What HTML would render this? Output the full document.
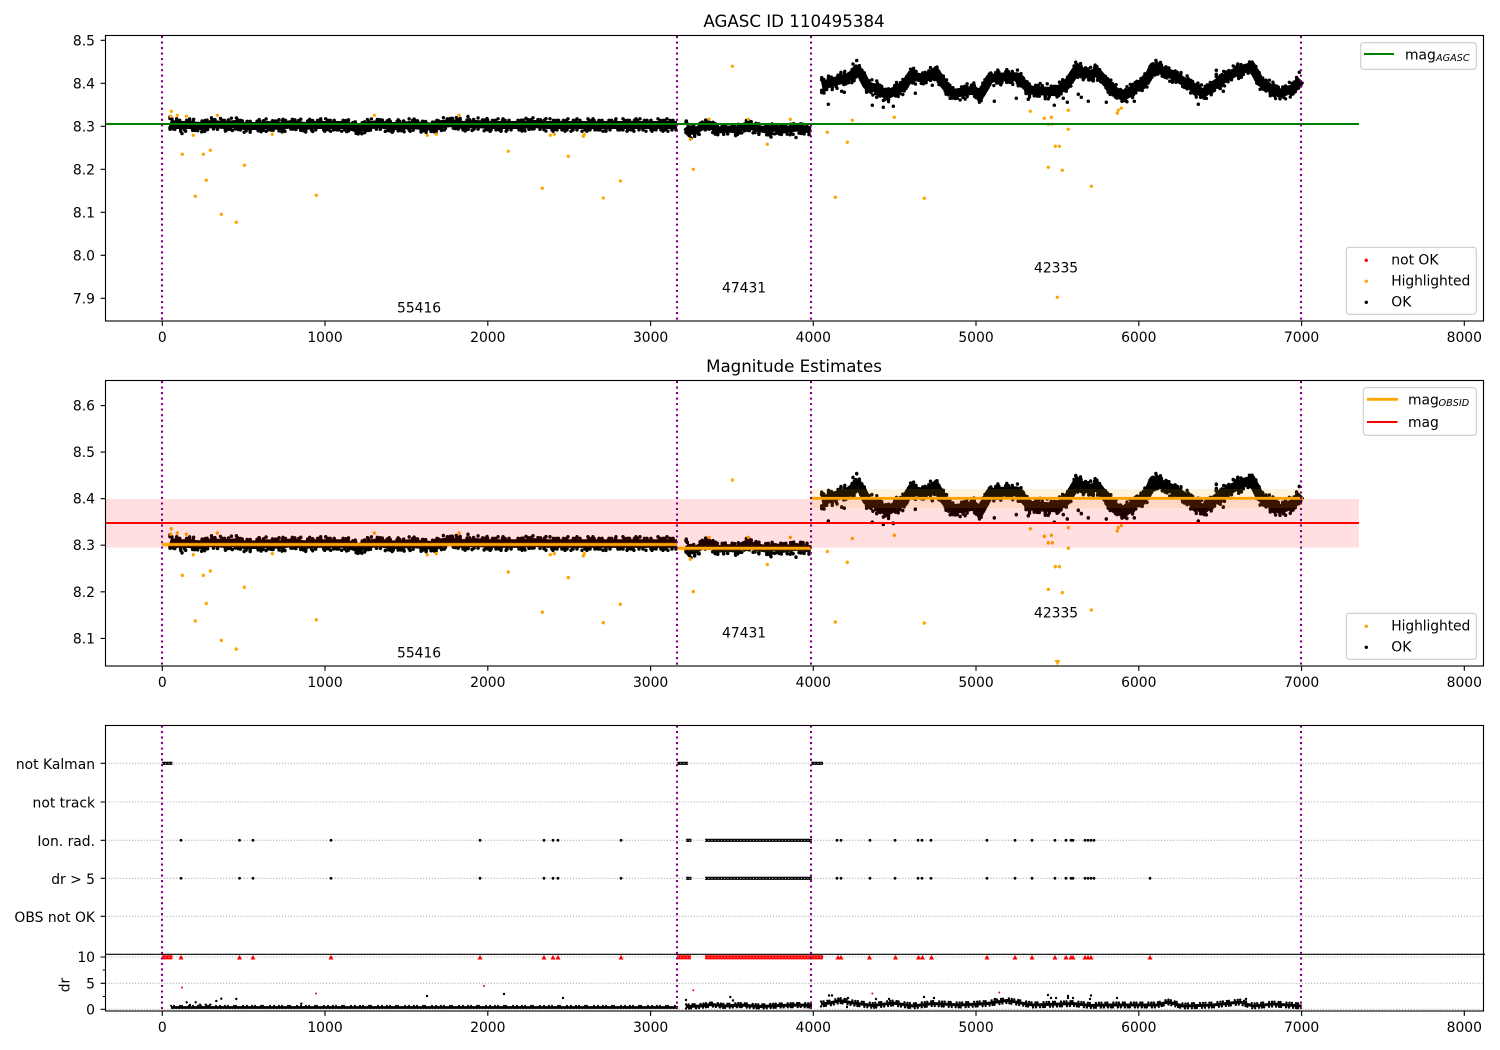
<!DOCTYPE html>
<html><head><meta charset="utf-8"><title>AGASC ID 110495384</title>
<style>
html,body{margin:0;padding:0;background:#fff}
svg{display:block}
text{font-family:"DejaVu Sans","Liberation Sans",sans-serif;font-size:13.89px;fill:#000}
.xt text{text-anchor:middle}
.yt text{text-anchor:end}
.sub{font-size:9.7px;font-style:italic}
.tk{stroke:#000;stroke-width:1.11;fill:none}
.ax{fill:none;stroke:#000;stroke-width:1.11}
.pu{stroke:#800080;stroke-width:2.08;stroke-dasharray:2.08 3.44;fill:none}
.gr{stroke:#b0b0b0;stroke-width:1.11;stroke-dasharray:1.11 1.83;fill:none}
.lg{fill:#fff;fill-opacity:.8;stroke:#ccc;stroke-width:1.11}
</style></head>
<body>
<svg xmlns="http://www.w3.org/2000/svg" width="1500" height="1050" viewBox="0 0 1500 1050">
<defs>
<clipPath id="c1"><rect x="105.5" y="35.5" width="1378" height="285.5"/></clipPath>
<clipPath id="c2"><rect x="105.5" y="380.5" width="1378" height="285.5"/></clipPath>
<path id="s1" d="M170 123L176 125 188 125 200 126 212 124 224 125 236 124 244 126 256 126 268 125 280 126 292 124 304 126 316 125 332 125 345 125 352 127 358 129 366 126 378 124 390 126 400 126 410 125 424 126 436 127 442 124 452 123 462 125 476 124 490 125 504 125 520 125 534 124 548 125 560 125 580 125 600 125 620 125 640 125 660 125 677 125"/>
<path id="s2" d="M686 127L690 131.7 696.7 130 702 127 708 123.3 713 127 718 130 728 129 736.7 130 742 127 746.7 125 756 128 766.7 130 775 128 783 130 796.7 128 811 130"/>
<path id="s3" d="M821.7 85L827 84 833 81.7 840 80 846.7 78.3 852 75 856.7 70.7 861.7 75 866.7 85 871 87 876.7 88.3 882 92 886.7 95 893.3 91.7 898 89 903.3 86.7 908 80 911.7 75 917 77 923.3 78.3 929 76 935 71.7 939 77 943.3 83.3 948 89 953.3 93.3 963 92 973.3 90 980 95 985 87 990 78.3 1003 77 1016.7 76.7 1023 83 1030 90 1043 91 1056.7 91.7 1064 86 1070 80 1073 75 1076.7 69.3 1083 72 1090 75 1096.7 71.7 1103 79 1110 86.7 1116 92 1123.3 96.7 1130 92 1136.7 86.7 1146.7 80 1150 74 1153.3 66.7 1163 71 1173.3 75 1181 80 1190 85 1197 90 1203.3 93.3 1210 88 1216.7 83.3 1225 78 1233.3 73.3 1243 69 1251.7 66.7 1256 74 1260 81.7 1270 88 1280 93.3 1293.3 88.3 1301 80"/>
<path id="b3" d="M821 1004L830 1003 840 1000.5 853 1003 873 1005.5 893 1003 913 1006 933 1003.5 960 1005 987 1003.5 1006.7 1000.5 1033 1005 1073 1003.5 1090 1005.5 1106.7 1005 1140 1005 1156.7 1005 1168 1002 1183 1006 1213 1005 1240 1002 1253 1006 1273 1004 1301.7 1006"/>
<path id="b2" d="M686 1006.5L700 1006 712 1004.5 725 1006 740 1005 760 1006.5 780 1005.5 800 1005 812 1005.5"/>
<g id="d">
 <g fill="none" stroke="#000" stroke-linejoin="round">
  <use href="#s1" stroke-width="8"/><use href="#s2" stroke-width="7"/><use href="#s3" stroke-width="9"/>
  <g stroke-width="3.6" stroke-linecap="round" stroke-dasharray="0 2 0 5 0 3 0 7 0 2.5 0 4 0 9 0 3">
   <g transform="translate(0,-4.6)"><use href="#s1"/><use href="#s2"/></g><use href="#s3" transform="translate(0,-5.2)"/>
  </g>
  <g stroke-width="3.6" stroke-linecap="round" stroke-dasharray="0 3 0 2 0 6 0 4 0 8 0 2 0 3 0 5">
   <g transform="translate(0,4.8)"><use href="#s1"/><use href="#s2"/></g><use href="#s3" transform="translate(0,5.4)"/>
  </g>
  <g stroke-width="3.4" stroke-linecap="round" stroke-dasharray="0 7 0 13 0 4 0 18 0 9 0 11 0 5 0 23">
   <g transform="translate(0,-6.2)"><use href="#s1"/></g><use href="#s3" transform="translate(0,-7.4)"/>
  </g>
  <g stroke-width="3.4" stroke-linecap="round" stroke-dasharray="0 11 0 5 0 16 0 3 0 21 0 7 0 12 0 6">
   <g transform="translate(0,6.2)"><use href="#s1"/></g><use href="#s2" transform="translate(0,5.8)"/><use href="#s3" transform="translate(0,7.6)"/>
  </g>
  <path stroke-width="3.5" stroke-linecap="round" d="M828.3 104.3h0M841.7 91.3h0M844.3 92.3h0M872.3 105.3h0M876.7 97.3h0M883.3 107.3h0M893.3 106.3h0M915.3 93.3h0M932.3 85.3h0M994.3 101.3h0M1016.3 98.3h0M1028.3 99.3h0M1054.3 105.3h0M1067.3 102.3h0M1063.3 98.3h0M1078.3 94.3h0M1081.3 97.3h0M1088.3 101.3h0M1106.3 102.3h0M1134.3 101.3h0M1198.3 104.3h0M1223.3 91.3h0M1075.7 62.3h0M1216.3 70.3h0M1216.3 74.3h0M1299.3 72.3h0M856.7 60.5h0M853 64h0M182 133.5h0M468 116.5h0M686.3 121h0M691 138h0M771 137h0M796 137.5h0M822 91h0M824 93h0"/>
 </g>
 <path fill="none" stroke="#ffa500" stroke-width="3.3" stroke-linecap="round" d="M171.3 111.3h0M170.7 116.3h0M177.3 115.3h0M186.3 116.3h0M217.3 115.3h0M193.3 135.3h0M182.3 154.3h0M203.3 154.3h0M210.3 150.3h0M244.3 165.3h0M206.3 180.3h0M195.3 196.3h0M221.3 214.3h0M236.3 222.3h0M316.3 195.3h0M272.3 134.3h0M374.3 115.3h0M427.3 135.3h0M436.3 134.3h0M459 115.3h0M508.3 151.3h0M542.3 188.3h0M550.3 135.3h0M554.3 134.3h0M568.3 156.3h0M583.3 136.3h0M584.3 134.3h0M603.3 198h0M620.3 181h0M732.3 66.3h0M693.3 169.3h0M690.3 139.3h0M709 119.3h0M748.3 119.3h0M790.3 119.3h0M767.3 144.3h0M827.3 132.3h0M847.3 142.3h0M852.3 120.3h0M835.3 197.3h0M894.3 117.3h0M924.3 198.3h0M1030.3 111.3h0M1044.3 118.3h0M1051.3 117.3h0M1048.3 124.3h0M1052.3 124.3h0M1068.3 110.3h0M1068.3 129.3h0M1055.3 146.3h0M1059.3 146.3h0M1048.3 167.3h0M1062.3 170.3h0M1057.3 297.3h0M1091.3 186.3h0M1117.3 113.3h0M1118.3 110.3h0M1121.3 108.3h0"/>
</g>
<path id="tri" d="M0-2.6L2.5 2H-2.5Z"/>
</defs>
<rect width="1500" height="1050" fill="#fff"/>

<!-- TOP AXES -->
<g clip-path="url(#c1)">
 <use href="#d"/>
 <path d="M105.5 124H1359" stroke="#008000" stroke-width="2.08" fill="none"/>
 <path class="pu" d="M162 36V321M677 36V321M811 36V321M1301 36V321"/>
</g>
<rect class="ax" x="105.5" y="35.5" width="1378" height="285.5"/>
<path class="tk" d="M162.3 321v4.9M325 321v4.9M487.8 321v4.9M650.6 321v4.9M813.3 321v4.9M976 321v4.9M1138.8 321v4.9M1301.6 321v4.9M1464.3 321v4.9M105.5 40.3h-4.9M105.5 83.3h-4.9M105.5 126.3h-4.9M105.5 169.3h-4.9M105.5 212.3h-4.9M105.5 255.3h-4.9M105.5 298.3h-4.9"/>
<g class="xt">
<text x="162.3" y="342">0</text><text x="325" y="342">1000</text><text x="487.8" y="342">2000</text><text x="650.6" y="342">3000</text><text x="813.3" y="342">4000</text><text x="976" y="342">5000</text><text x="1138.8" y="342">6000</text><text x="1301.6" y="342">7000</text><text x="1464.3" y="342">8000</text>
</g>
<g class="yt">
<text x="95" y="45.3">8.5</text><text x="95" y="88.3">8.4</text><text x="95" y="131.3">8.3</text><text x="95" y="174.3">8.2</text><text x="95" y="217.3">8.1</text><text x="95" y="260.3">8.0</text><text x="95" y="303.3">7.9</text>
</g>
<text x="794" y="27" text-anchor="middle" style="font-size:16.67px">AGASC ID 110495384</text>
<text x="397" y="312.3">55416</text><text x="722" y="292.3">47431</text><text x="1034" y="272.3">42335</text>
<rect class="lg" x="1360.7" y="42.7" width="115.6" height="26.6" rx="3"/>
<path d="M1364 54h30" stroke="#008000" stroke-width="2.08"/>
<text x="1405" y="59.3">mag</text><text class="sub" x="1436" y="61.2">AGASC</text>
<rect class="lg" x="1346.3" y="247.3" width="130" height="67" rx="3"/>
<circle cx="1366.3" cy="260.3" r="1.7" fill="#f00"/><circle cx="1366.3" cy="281.3" r="1.7" fill="#ffa500"/><circle cx="1366.3" cy="302.3" r="1.7" fill="#000"/>
<text x="1391.3" y="264.5">not OK</text><text x="1391.3" y="285.5" textLength="79">Highlighted</text><text x="1391.3" y="306.5">OK</text>

<!-- MIDDLE AXES -->
<g clip-path="url(#c2)">
 <use href="#d" transform="translate(0,408.13) scale(1,1.0837)"/>
 <path d="M1054.5 660h6l-3 5.5z" fill="#ffa500"/>
 <rect x="105.5" y="499" width="1253.5" height="48.7" fill="#f00" fill-opacity=".125"/>
 <rect x="162" y="542" width="515" height="5" fill="#ffa500" fill-opacity=".15"/>
 <rect x="677" y="545.5" width="134" height="6" fill="#ffa500" fill-opacity=".15"/>
 <rect x="811" y="489" width="490" height="19" fill="#ffa500" fill-opacity=".13"/>
 <path d="M105.5 523H1359" stroke="#f00" stroke-width="2.08" fill="none"/>
 <path d="M162 544.5H677M677 548.3H811M811 498.3H1303" stroke="#ffa500" stroke-width="2.8" fill="none"/>
 <path class="pu" d="M162 381V666M677 381V666M811 381V666M1301 381V666"/>
</g>
<rect class="ax" x="105.5" y="380.5" width="1378" height="285.5"/>
<path class="tk" d="M162.3 666v4.9M325 666v4.9M487.8 666v4.9M650.6 666v4.9M813.3 666v4.9M976 666v4.9M1138.8 666v4.9M1301.6 666v4.9M1464.3 666v4.9M105.5 405.6h-4.9M105.5 452.1h-4.9M105.5 498.7h-4.9M105.5 545.2h-4.9M105.5 591.8h-4.9M105.5 638.4h-4.9"/>
<g class="xt">
<text x="162.3" y="687">0</text><text x="325" y="687">1000</text><text x="487.8" y="687">2000</text><text x="650.6" y="687">3000</text><text x="813.3" y="687">4000</text><text x="976" y="687">5000</text><text x="1138.8" y="687">6000</text><text x="1301.6" y="687">7000</text><text x="1464.3" y="687">8000</text>
</g>
<g class="yt">
<text x="95" y="410.6">8.6</text><text x="95" y="457.1">8.5</text><text x="95" y="503.7">8.4</text><text x="95" y="550.2">8.3</text><text x="95" y="596.8">8.2</text><text x="95" y="643.4">8.1</text>
</g>
<text x="794" y="372" text-anchor="middle" style="font-size:16.67px">Magnitude Estimates</text>
<text x="397" y="657.3">55416</text><text x="722" y="637.3">47431</text><text x="1034" y="617.3">42335</text>
<rect class="lg" x="1363.3" y="387.7" width="113" height="47.6" rx="3"/>
<path d="M1367 399.3h31" stroke="#ffa500" stroke-width="2.8"/><path d="M1367 422h30.5" stroke="#f00" stroke-width="2.08"/>
<text x="1408" y="404.3">mag</text><text class="sub" x="1438.5" y="406.2">OBSID</text><text x="1408" y="427">mag</text>
<rect class="lg" x="1346.3" y="613.3" width="130" height="46" rx="3"/>
<circle cx="1366.3" cy="626.3" r="1.7" fill="#ffa500"/><circle cx="1366.3" cy="647.3" r="1.7" fill="#000"/>
<text x="1391.3" y="630.5" textLength="79">Highlighted</text><text x="1391.3" y="651.5">OK</text>

<!-- BOTTOM AXES -->
<path class="gr" d="M105.5 763.3H1483M105.5 802H1483M105.5 840.3H1483M105.5 878.3H1483M105.5 916.3H1483M105.5 957H1483M105.5 983.3H1483M105.5 1009.3H1483"/>
<!-- flag rows -->
<g fill="none" stroke="#000">
 <path stroke-width="3.2" d="M162 763.3H172.5M677 763.3H688M811 763.3H823M705 840.3H812M705 878.3H812M686 840.3H691.5M686 878.3H691.5"/>
 <path stroke="#ddd" stroke-width=".9" stroke-dasharray="1 2.2" d="M162 763.3H172.5M677 763.3H688M811 763.3H823M705 840.3H812M705 878.3H812M686 840.3H691.5M686 878.3H691.5"/>
 <path stroke-width="2.8" stroke-linecap="round" d="M181 840.3h0M239.5 840.3h0M253 840.3h0M331 840.3h0M480 840.3h0M544 840.3h0M553 840.3h0M558 840.3h0M621 840.3h0M837 840.3h0M841 840.3h0M870 840.3h0M895 840.3h0M918 840.3h0M922 840.3h0M931 840.3h0M987 840.3h0M1015 840.3h0M1032 840.3h0M1055 840.3h0M1066 840.3h0M1071 840.3h0M1073 840.3h0M1085 840.3h0M1088 840.3h0M1091 840.3h0M1094 840.3h0M181 878.3h0M239.5 878.3h0M253 878.3h0M331 878.3h0M480 878.3h0M544 878.3h0M553 878.3h0M558 878.3h0M621 878.3h0M837 878.3h0M841 878.3h0M870 878.3h0M895 878.3h0M918 878.3h0M922 878.3h0M931 878.3h0M987 878.3h0M1015 878.3h0M1032 878.3h0M1055 878.3h0M1066 878.3h0M1071 878.3h0M1073 878.3h0M1085 878.3h0M1088 878.3h0M1091 878.3h0M1094 878.3h0M1150 878.3h0"/>
</g>
<!-- red row -->
<path d="M162 955.2h10.5v4.2H162zM677 955.2h14v4.2h-14zM705 955.2h118v4.2H705z" fill="#f00"/>
<path d="M162 957.2h10.5M677 957.2h14M705 957.2h118" stroke="#ffc0c0" stroke-width=".8" stroke-dasharray="1 2.2" fill="none"/>
<g fill="#f00" transform="translate(0,957.5)">
<use href="#tri" x="181"/><use href="#tri" x="239.5"/><use href="#tri" x="253"/><use href="#tri" x="331"/><use href="#tri" x="480"/><use href="#tri" x="544"/><use href="#tri" x="553"/><use href="#tri" x="558"/><use href="#tri" x="621"/><use href="#tri" x="838"/><use href="#tri" x="841"/><use href="#tri" x="869.5"/><use href="#tri" x="895.5"/><use href="#tri" x="918.5"/><use href="#tri" x="922.5"/><use href="#tri" x="931.5"/><use href="#tri" x="987"/><use href="#tri" x="1015"/><use href="#tri" x="1032"/><use href="#tri" x="1055"/><use href="#tri" x="1066"/><use href="#tri" x="1071"/><use href="#tri" x="1073"/><use href="#tri" x="1085"/><use href="#tri" x="1088"/><use href="#tri" x="1091"/><use href="#tri" x="1150"/>
</g>
<path fill="none" stroke="#f00" stroke-width="2" stroke-linecap="round" d="M182 987.5h0M316 993.5h0M484 986h0M693.3 990.3h0M872.3 993.5h0M999.3 992.5h0"/>
<!-- dr band -->
<g fill="none" stroke="#000" stroke-linejoin="round">
 <path stroke-width="2.8" d="M171 1007.5H678"/>
 <path stroke-width="2" stroke-linecap="round" stroke-dasharray="0 3 0 6 0 2 0 7 0 4 0 5" d="M171 1005.8H678"/>
 <use href="#b2" stroke-width="3"/><use href="#b3" stroke-width="3"/>
 <g stroke-width="2.4" stroke-linecap="round" stroke-dasharray="0 2.5 0 4 0 2 0 6 0 3">
  <use href="#b2" transform="translate(0,-2)"/><use href="#b3" transform="translate(0,-2.4)"/>
 </g>
 <g stroke-width="2.4" stroke-linecap="round" stroke-dasharray="0 3 0 2 0 5 0 3 0 4">
  <use href="#b2" transform="translate(0,2)"/><use href="#b3" transform="translate(0,2.4)"/>
 </g>
 <path stroke-width="2.4" stroke-linecap="round" d="M186.7 1002.3h0M195.7 1002.3h0M190 1005h0M200 1004.7h0M205.7 1004.7h0M210.3 1004.7h0M216.3 1001h0M221.3 998.7h0M236.3 999h0M301.3 1003.7h0M427 996h0M504 994h0M563 998h0M686 1000h0M730.3 997h0M733 1000.5h0M829 995.5h0M832 995.5h0M847 1007h0M848 998h0M876 999h0M889 999h0M924 997h0M934 998h0M995 999h0M1048 995h0M1051 998h0M1068 996h0M1068 998h0M1073 998h0M1091 995.5h0M1117 998h0M1246 999h0M1090 999h0M1056 998h0"/>
</g>
<path class="pu" d="M162 725.5V1011M677 725.5V1011M811 725.5V1011M1301 725.5V1011"/>
<rect class="ax" x="105.5" y="725.5" width="1378" height="285.5"/>
<path class="ax" d="M105.5 954.3H1485"/>
<path class="tk" d="M162.3 1011v4.9M325 1011v4.9M487.8 1011v4.9M650.6 1011v4.9M813.3 1011v4.9M976 1011v4.9M1138.8 1011v4.9M1301.6 1011v4.9M1464.3 1011v4.9M105.5 763.3h-4.9M105.5 802h-4.9M105.5 840.3h-4.9M105.5 878.3h-4.9M105.5 916.3h-4.9M105.5 957h-4.9M105.5 983.3h-4.9M105.5 1009.3h-4.9M105.5 970h-2.8M105.5 996.5h-2.8"/>
<g class="xt">
<text x="162.3" y="1032">0</text><text x="325" y="1032">1000</text><text x="487.8" y="1032">2000</text><text x="650.6" y="1032">3000</text><text x="813.3" y="1032">4000</text><text x="976" y="1032">5000</text><text x="1138.8" y="1032">6000</text><text x="1301.6" y="1032">7000</text><text x="1464.3" y="1032">8000</text>
</g>
<g class="yt">
<text x="95" y="768.8">not Kalman</text><text x="95" y="807.5">not track</text><text x="95" y="845.8">Ion. rad.</text><text x="95" y="883.8">dr &gt; 5</text><text x="95" y="921.8">OBS not OK</text><text x="95" y="962">10</text><text x="95" y="988.3">5</text><text x="95" y="1014.3">0</text>
</g>
<text transform="translate(69.5,985) rotate(-90)" text-anchor="middle">dr</text>
</svg>
</body></html>
